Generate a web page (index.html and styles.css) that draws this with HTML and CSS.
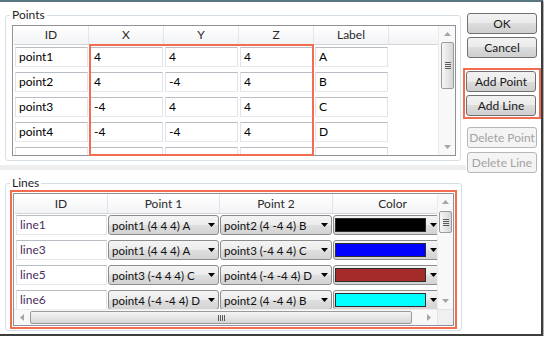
FILE: index.html
```html
<!DOCTYPE html>
<html>
  <head>
    <meta charset="utf-8">
    <title>Points and Lines</title>
    <link rel="stylesheet" href="styles.css">
  </head>
  <body>
    <div class="window">
      <div class="main">
        <fieldset class="group points">
          <legend>Points</legend>
          <div class="grid">
            <div class="view">
              <div class="row head">
                <div class="col">ID</div>
                <div class="col">X</div>
                <div class="col">Y</div>
                <div class="col">Z</div>
                <div class="col">Label</div>
                <div class="fill"></div>
              </div>
              <div class="row">
                <div class="col"><div class="box">point1</div></div>
                <div class="col"><div class="box">4</div></div>
                <div class="col"><div class="box">4</div></div>
                <div class="col"><div class="box">4</div></div>
                <div class="col"><div class="box">A</div></div>
              </div>
              <div class="row">
                <div class="col"><div class="box">point2</div></div>
                <div class="col"><div class="box">4</div></div>
                <div class="col"><div class="box">-4</div></div>
                <div class="col"><div class="box">4</div></div>
                <div class="col"><div class="box">B</div></div>
              </div>
              <div class="row">
                <div class="col"><div class="box">point3</div></div>
                <div class="col"><div class="box">-4</div></div>
                <div class="col"><div class="box">4</div></div>
                <div class="col"><div class="box">4</div></div>
                <div class="col"><div class="box">C</div></div>
              </div>
              <div class="row">
                <div class="col"><div class="box">point4</div></div>
                <div class="col"><div class="box">-4</div></div>
                <div class="col"><div class="box">-4</div></div>
                <div class="col"><div class="box">4</div></div>
                <div class="col"><div class="box">D</div></div>
              </div>
              <div class="row">
                <div class="col"><div class="box"></div></div>
                <div class="col"><div class="box"></div></div>
                <div class="col"><div class="box"></div></div>
                <div class="col"><div class="box"></div></div>
                <div class="col"><div class="box"></div></div>
              </div>
            </div>
            <div class="vscroll">
              <div class="step"><svg width="7" height="4"><path d="M0 4L3.5 0L7 4Z"/></svg></div>
              <div class="thumb tall">
                <svg width="6" height="7"><path d="M0 0.5H6M0 2.5H6M0 4.5H6M0 6.5H6"/></svg>
              </div>
              <div class="track"></div>
              <div class="step"><svg width="7" height="4"><path d="M0 0H7L3.5 4Z"/></svg></div>
            </div>
            <div class="mark"></div>
          </div>
        </fieldset>

        <div class="splitter"></div>

        <fieldset class="group lines">
          <legend>Lines</legend>
          <div class="marked">
            <div class="grid">
              <div class="view">
                <div class="row head">
                  <div class="col c-id">ID</div>
                  <div class="col c-p">Point 1</div>
                  <div class="col c-p2">Point 2</div>
                  <div class="col c-color">Color</div>
                </div>
                <div class="row">
                  <div class="col c-id"><div class="box">line1</div></div>
                  <div class="col c-p"><div class="combo"><span class="val">point1 (4 4 4) A</span><span class="drop"><svg width="7" height="4"><path d="M0 0H7L3.5 4Z"/></svg></span></div></div>
                  <div class="col c-p2"><div class="combo"><span class="val">point2 (4 -4 4) B</span><span class="drop"><svg width="7" height="4"><path d="M0 0H7L3.5 4Z"/></svg></span></div></div>
                  <div class="col c-color"><div class="combo"><span class="swatch black"></span><span class="drop"><svg width="7" height="4"><path d="M0 0H7L3.5 4Z"/></svg></span></div></div>
                </div>
                <div class="row">
                  <div class="col c-id"><div class="box">line3</div></div>
                  <div class="col c-p"><div class="combo"><span class="val">point1 (4 4 4) A</span><span class="drop"><svg width="7" height="4"><path d="M0 0H7L3.5 4Z"/></svg></span></div></div>
                  <div class="col c-p2"><div class="combo"><span class="val">point3 (-4 4 4) C</span><span class="drop"><svg width="7" height="4"><path d="M0 0H7L3.5 4Z"/></svg></span></div></div>
                  <div class="col c-color"><div class="combo"><span class="swatch blue"></span><span class="drop"><svg width="7" height="4"><path d="M0 0H7L3.5 4Z"/></svg></span></div></div>
                </div>
                <div class="row">
                  <div class="col c-id"><div class="box">line5</div></div>
                  <div class="col c-p"><div class="combo"><span class="val">point3 (-4 4 4) C</span><span class="drop"><svg width="7" height="4"><path d="M0 0H7L3.5 4Z"/></svg></span></div></div>
                  <div class="col c-p2"><div class="combo"><span class="val">point4 (-4 -4 4) D</span><span class="drop"><svg width="7" height="4"><path d="M0 0H7L3.5 4Z"/></svg></span></div></div>
                  <div class="col c-color"><div class="combo"><span class="swatch brown"></span><span class="drop"><svg width="7" height="4"><path d="M0 0H7L3.5 4Z"/></svg></span></div></div>
                </div>
                <div class="row">
                  <div class="col c-id"><div class="box">line6</div></div>
                  <div class="col c-p"><div class="combo"><span class="val">point4 (-4 -4 4) D</span><span class="drop"><svg width="7" height="4"><path d="M0 0H7L3.5 4Z"/></svg></span></div></div>
                  <div class="col c-p2"><div class="combo"><span class="val">point2 (4 -4 4) B</span><span class="drop"><svg width="7" height="4"><path d="M0 0H7L3.5 4Z"/></svg></span></div></div>
                  <div class="col c-color"><div class="combo"><span class="swatch cyan"></span><span class="drop"><svg width="7" height="4"><path d="M0 0H7L3.5 4Z"/></svg></span></div></div>
                </div>
              </div>
              <div class="vscroll">
                <div class="step"><svg width="7" height="4"><path d="M0 4L3.5 0L7 4Z"/></svg></div>
                <div class="thumb short">
                  <svg width="6" height="7"><path d="M0 0.5H6M0 2.5H6M0 4.5H6M0 6.5H6"/></svg>
                </div>
                <div class="track"></div>
                <div class="step"><svg width="7" height="4"><path d="M0 0H7L3.5 4Z"/></svg></div>
              </div>
              <div class="hscroll">
                <div class="step"><svg width="4" height="7"><path d="M4 0L0 3.5L4 7Z"/></svg></div>
                <div class="thumb wide">
                  <svg width="7" height="6"><path d="M0.5 0V6M2.5 0V6M4.5 0V6M6.5 0V6"/></svg>
                </div>
                <div class="track"></div>
                <div class="step"><svg width="4" height="7"><path d="M0 0L4 3.5L0 7Z"/></svg></div>
              </div>
              <div class="corner"></div>
            </div>
          </div>
        </fieldset>
      </div>

      <div class="side">
        <button class="btn">OK</button>
        <button class="btn gap-s">Cancel</button>
        <div class="marked add">
          <button class="btn">Add Point</button>
          <button class="btn gap-s">Add Line</button>
        </div>
        <button class="btn off gap-m">Delete Point</button>
        <button class="btn off gap-t">Delete Line</button>
      </div>
    </div>
  </body>
</html>
```

FILE: styles.css
```css
* {
  box-sizing: border-box;
}

body {
  margin: 0;
  background: #fff;
  font-family: "Lato", "Liberation Sans", sans-serif;
  font-size: 12px;
  color: #1e1e1e;
}

.window {
  width: 543px;
  height: 336px;
  display: flex;
  background: #fff;
  border-top: 2px solid #587582;
  border-right: 2px solid #3d3d3d;
  border-bottom: 2px solid #3d3d3d;
  box-shadow: 1px 1px 2px rgba(0, 0, 0, .45);
}

.main {
  width: 466px;
  flex: none;
  display: flex;
  flex-direction: column;
}

/* group boxes */
.group {
  min-width: 0;
  margin: 5px 0 0 5px;
  border: 1px solid #d5dfe5;
  border-radius: 3px;
}

.group legend {
  padding: 0 2px;
  line-height: 16px;
}

.points {
  width: 456px;
  padding: 2px 4px 4px 6px;
}

.points legend {
  margin-left: -2px;
}

.lines {
  width: 457px;
  padding: 0 4px 1px 4px;
}

.splitter {
  height: 5px;
  margin-top: 4px;
  background: #efefef;
}

.marked {
  border: 2px solid #f26c4f;
  padding: 1px;
}

.lines .marked {
  margin-top: -1px;
}

/* data grids */
.grid {
  position: relative;
  display: flex;
  border: 1px solid #8f9397;
  background: #fff;
}

.points .grid {
  height: 131px;
}

.lines .grid {
  height: 133px;
  display: grid;
  grid-template-columns: 1fr 16px;
  grid-template-rows: 1fr 16px;
}

.view {
  flex: 1;
  min-width: 0;
  overflow: hidden;
  padding-left: 1px;
}

.row {
  display: flex;
  height: 25px;
  padding-top: 2px;
}

.lines .row {
  padding-top: 1px;
}

.row.head {
  height: 19px;
  padding-top: 0;
  border-bottom: 1px solid #d5d5d5;
  background: linear-gradient(#ffffff, #f2f3f5);
}

.lines .row.head {
  height: 20px;
}

.col {
  flex: none;
  width: 75px;
}

.head .col {
  text-align: center;
  line-height: 18px;
  border-right: 1px solid #e2e4e7;
  color: #2a2a2a;
}

.lines .head .col {
  line-height: 19px;
}

.head .fill {
  flex: 1;
}

.c-id { width: 93px; }
.c-p { width: 112px; }
.c-p2 { width: 113px; }
.c-color { width: 120px; }

.box {
  height: 20px;
  margin: 0 1px;
  padding-left: 3px;
  line-height: 18px;
  white-space: nowrap;
  overflow: hidden;
  color: #000;
  background: #fff;
  border: 1px solid #e2e3ea;
  border-top-color: #b9bcc3;
  border-bottom-color: #e3e9ef;
}

.lines .box {
  color: #4b2d5e;
}

.combo {
  height: 20px;
  margin: 0 1px 0 0;
  display: flex;
  align-items: center;
  padding-left: 3px;
  border: 1px solid #8c8c8c;
  border-radius: 3px;
  background: linear-gradient(#f4f4f4, #ececec 50%, #dfdfdf 50%, #d3d3d3);
  white-space: nowrap;
}

.c-color .combo {
  width: 108px;
  padding-left: 1px;
}

.combo .val {
  flex: 1;
  overflow: hidden;
  font-size: 11.5px;
  color: #111;
}

.combo .drop {
  width: 14px;
  display: flex;
  justify-content: center;
}

.combo .drop path {
  fill: #000;
}

.swatch {
  flex: 1;
  height: 14px;
  border: 1px solid #2d2d2d;
}

.black { background: #000; }
.blue { background: #0000ff; }
.brown { background: #a52a2a; }
.cyan { background: #00ffff; }

/* scroll bars */
.vscroll {
  width: 17px;
  flex: none;
  display: flex;
  flex-direction: column;
  align-items: center;
  background: #f8f8f8;
  border-left: 1px solid #ececec;
}

.lines .vscroll {
  width: 16px;
}

.hscroll {
  display: flex;
  align-items: center;
  background: #f8f8f8;
  border-top: 1px solid #ececec;
}

.step {
  height: 16px;
  width: 16px;
  flex: none;
  display: flex;
  align-items: center;
  justify-content: center;
}

.step path {
  fill: #a2a6ab;
}

.track {
  flex: 1;
}

.thumb {
  display: flex;
  align-items: center;
  justify-content: center;
  border: 1px solid #9a9a9a;
  border-radius: 2px;
  background: linear-gradient(to right, #f5f5f5, #e6e6e6 50%, #d5d5d5);
}

.thumb path {
  stroke: #5a5a5a;
  stroke-width: 1;
}

.thumb.tall {
  width: 13px;
  height: 47px;
  margin-left: 1px;
}

.thumb.short {
  width: 13px;
  height: 22px;
  margin-top: 1px;
}

.thumb.wide {
  width: 382px;
  height: 13px;
  background: linear-gradient(#f5f5f5, #e6e6e6 50%, #d5d5d5);
}

.hscroll .track {
  max-width: 9px;
}

.corner {
  background: #f0f0f0;
  border-top: 1px solid #e4e4e4;
  border-left: 1px solid #e4e4e4;
}

.mark {
  position: absolute;
  left: 76px;
  top: 18px;
  width: 225px;
  height: 112px;
  border: 2px solid #f26c4f;
  pointer-events: none;
}

/* buttons */
.side {
  display: flex;
  flex-direction: column;
  padding: 11px 0 0 1px;
}

.btn {
  width: 70px;
  height: 21px;
  padding: 0;
  font: inherit;
  color: #1a1a1a;
  border: 1px solid #707070;
  border-radius: 3px;
  background: linear-gradient(#f2f2f2, #ebebeb 50%, #dddddd 50%, #cfcfcf);
}

.btn.off {
  color: #a3a3a3;
  border-color: #b3b7ba;
  background: #f4f4f4;
}

.gap-s {
  margin-top: 3px;
}

.gap-m {
  margin-top: 8px;
}

.gap-t {
  margin-top: 4px;
}

.add {
  margin: 10px 0 0 -4px;
  width: 78px;
}
```
